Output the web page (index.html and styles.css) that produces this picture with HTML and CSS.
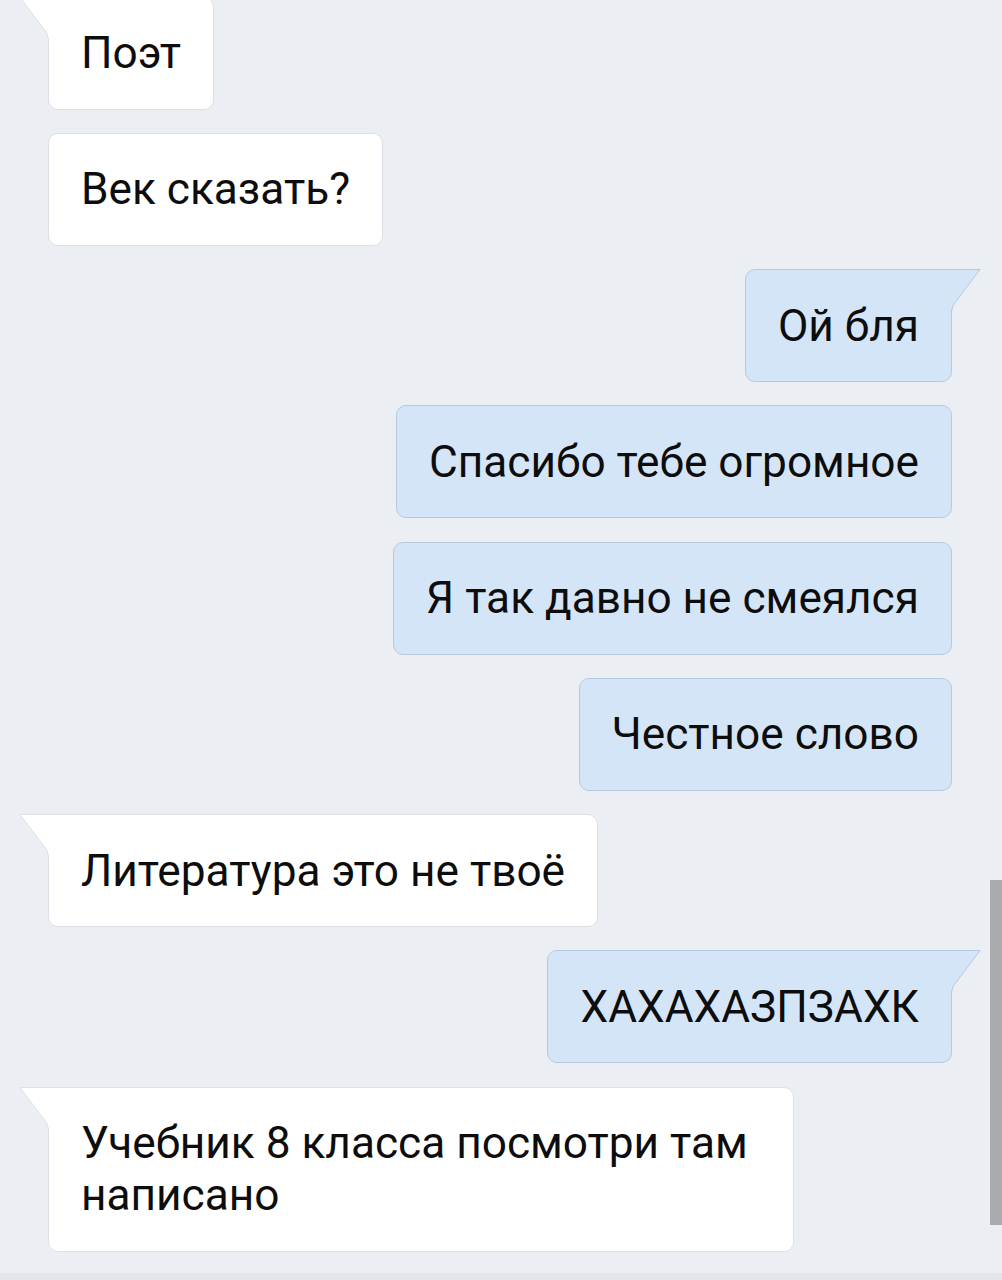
FILE: index.html
```html
<!DOCTYPE html>
<html lang="ru">
<head>
<meta charset="utf-8">
<title>Чат</title>
<link rel="stylesheet" href="styles.css">
</head>
<body>
<div class="chat">
  <div class="list">
    <div class="msg in"><svg class="tail" width="36" height="48" viewBox="0 0 36 48"><path class="tf" d="M2,0.5 L25,31 Q29.5,35 30.5,42 L30.5,48 L36,48 L36,0.5 Z"/><path class="ts" d="M36,0.5 L2,0.5 L25,31 Q29.5,35 30.5,42 L30.5,48"/></svg>Поэт</div>
    <div class="msg in plain">Век сказать?</div>
    <div class="msg out"><svg class="tail" width="36" height="48" viewBox="0 0 36 48"><path class="tf" d="M2,0.5 L25,31 Q29.5,35 30.5,42 L30.5,48 L36,48 L36,0.5 Z"/><path class="ts" d="M36,0.5 L2,0.5 L25,31 Q29.5,35 30.5,42 L30.5,48"/></svg>Ой бля</div>
    <div class="msg out plain">Спасибо тебе огромное</div>
    <div class="msg out plain">Я так давно не смеялся</div>
    <div class="msg out plain">Честное слово</div>
    <div class="msg in"><svg class="tail" width="36" height="48" viewBox="0 0 36 48"><path class="tf" d="M2,0.5 L25,31 Q29.5,35 30.5,42 L30.5,48 L36,48 L36,0.5 Z"/><path class="ts" d="M36,0.5 L2,0.5 L25,31 Q29.5,35 30.5,42 L30.5,48"/></svg>Литература это не твоё</div>
    <div class="msg out"><svg class="tail" width="36" height="48" viewBox="0 0 36 48"><path class="tf" d="M2,0.5 L25,31 Q29.5,35 30.5,42 L30.5,48 L36,48 L36,0.5 Z"/><path class="ts" d="M36,0.5 L2,0.5 L25,31 Q29.5,35 30.5,42 L30.5,48"/></svg>ХАХАХАЗПЗАХК</div>
    <div class="msg in"><svg class="tail" width="36" height="48" viewBox="0 0 36 48"><path class="tf" d="M2,0.5 L25,31 Q29.5,35 30.5,42 L30.5,48 L36,48 L36,0.5 Z"/><path class="ts" d="M36,0.5 L2,0.5 L25,31 Q29.5,35 30.5,42 L30.5,48"/></svg>Учебник 8 класса посмотри там написано</div>
  </div>
  <div class="footer"></div>
  <div class="scrollbar"></div>
</div>
</body>
</html>
```
FILE: styles.css
```css
html, body {
  margin: 0;
  padding: 0;
}
body {
  background: #ebeef3;
  font-family: Roboto, "Noto Sans", sans-serif;
  color: #0d0d0d;
  height: 1280px;
  overflow: hidden;
}
.chat {
  position: relative;
  height: 1280px;
  display: flex;
  flex-direction: column;
}
.list {
  display: flex;
  flex-direction: column;
  gap: 23.25px;
  margin-top: -3.5px;
  padding: 0 50px 0 48px;
}
.msg {
  position: relative;
  box-sizing: border-box;
  max-width: 746px;
  padding: 29.5px 32px;
  font-size: 44.2px;
  line-height: 52px;
  border-radius: 10px;
  border: 1px solid #dfe3e9;
}
.msg.in {
  align-self: flex-start;
  background: #ffffff;
  border-color: #dde1e7;
  border-top-left-radius: 0;
}
.msg.out {
  align-self: flex-end;
  background: #d5e5f8;
  border-color: #b8c9dd;
  border-top-right-radius: 0;
}
.msg.plain {
  border-radius: 10px;
}
.tail {
  position: absolute;
  top: -1px;
  display: block;
}
.msg.in .tail {
  left: -31px;
}
.msg.out .tail {
  right: -31px;
  transform: scaleX(-1);
}
.tf {
  stroke: none;
}
.ts {
  fill: none;
  stroke-width: 1;
}
.msg.in .tf { fill: #ffffff; }
.msg.in .ts { stroke: #dde1e7; }
.msg.out .tf { fill: #d5e5f8; }
.msg.out .ts { stroke: #b8c9dd; }
.footer {
  margin-top: auto;
  height: 7px;
  background: #e2e5e9;
}
.scrollbar {
  position: absolute;
  right: 0;
  top: 880px;
  width: 12px;
  height: 345px;
  background: #a9acaf;
}
```
